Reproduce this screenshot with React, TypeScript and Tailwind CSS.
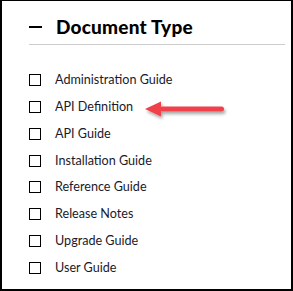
import React from "react";

const docTypes = [
  "Administration Guide",
  "API Definition",
  "API Guide",
  "Installation Guide",
  "Reference Guide",
  "Release Notes",
  "Upgrade Guide",
  "User Guide",
];

export default function App() {
  return (
    <div className="relative w-[293px] h-[291px] bg-white border-t border-l-2 border-r-2 border-b-2 border-black font-['Lato',sans-serif]">
      <div className="ml-[27px] mr-[6px] pt-[13px]">
        <div className="flex items-center h-[26px]">
          <span className="w-[13px] h-[2px] bg-black" />
          <h2 className="ml-[14px] text-[19px] font-black text-black tracking-[0.2px]">Document Type</h2>
        </div>
        <div className="mt-[4px] h-px bg-[#cccccc]" />
        <ul className="mt-[27px] flex flex-col gap-[10.85px]">
          {docTypes.map((t) => (
            <li key={t} className="flex items-center h-4">
              <span className="w-3 h-3 border border-black bg-white" />
              <span className="ml-[14px] text-[12.6px] text-[#1a1a2a] leading-4">{t}</span>
            </li>
          ))}
        </ul>
      </div>

      {/* red callout arrow */}
      <svg className="absolute left-[141px] top-[98px]" width="88" height="24" viewBox="0 0 88 24">
        <defs>
          <filter id="sh" x="-20%" y="-50%" width="140%" height="200%">
            <feDropShadow dx="1.5" dy="2.5" stdDeviation="1.5" floodColor="#000" floodOpacity="0.35" />
          </filter>
        </defs>
        <g filter="url(#sh)">
          <polygon points="2,10 18,2.5 18,17.5" fill="#f0404a" />
          <rect x="17" y="7.5" width="64" height="5" rx="2.5" fill="#f0404a" />
        </g>
      </svg>
    </div>
  );
}
